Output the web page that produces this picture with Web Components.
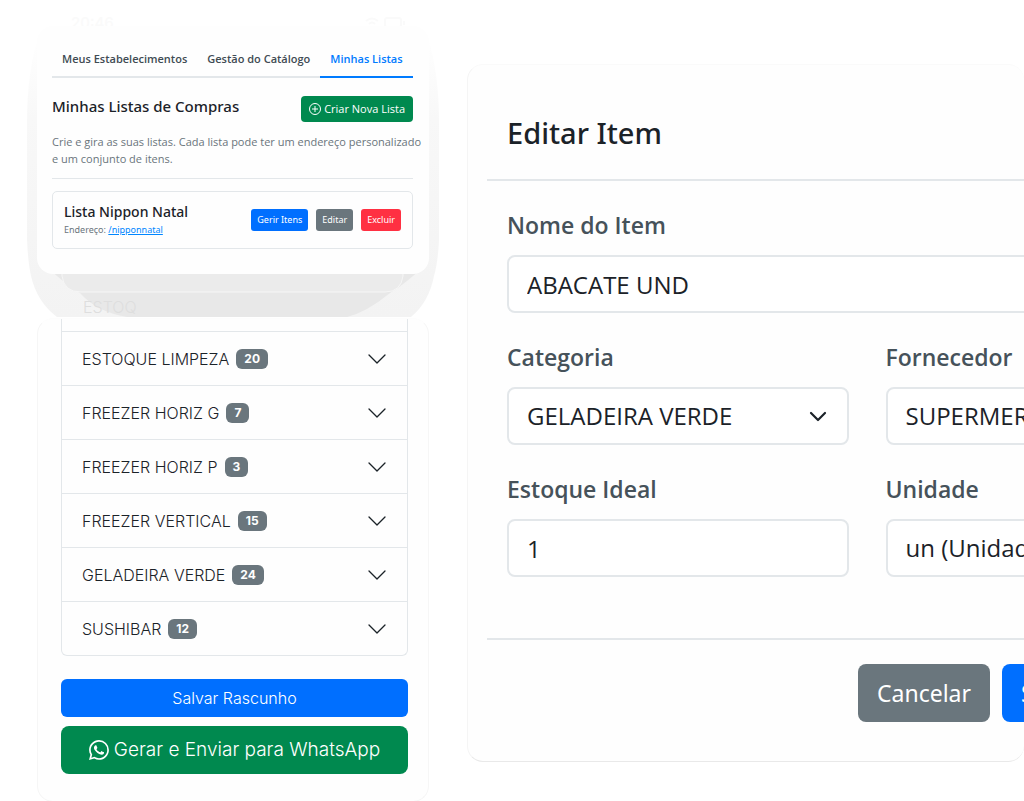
<!DOCTYPE html>
<html lang="pt-BR">
<head>
<meta charset="utf-8">
<meta name="viewport" content="width=device-width, initial-scale=1">
<title>Listas de Compras</title>
<style>
  body { margin: 0; background: #fff; overflow-x: hidden; }
</style>
</head>
<body>
<app-showcase>
  <lists-panel slot="lists"></lists-panel>
  <stock-panel slot="stock"></stock-panel>
  <item-dialog slot="dialog"></item-dialog>
</app-showcase>

<script>
const define = (name, markup) => {
  const template = document.createElement('template');
  template.innerHTML = '<style>*{box-sizing:border-box}</style>' + markup;
  customElements.define(name, class extends HTMLElement {
    constructor() {
      super();
      this.attachShadow({ mode: 'open' }).append(template.content.cloneNode(true));
    }
  });
};

define('app-showcase', `
  <style>
    :host {
      --blue: #006fff; --green: #00894f; --gray: #6a767d; --red: #ff3042;
      --ink: #1b2228; --line: #e3e7ea;
      --ui: "Open Sans", "Noto Sans", sans-serif;
      --heading: "Noto Sans", "Open Sans", sans-serif;
      --phone: Inter, Roboto, sans-serif;
      display: grid; grid-template-columns: minmax(0, 392fr) minmax(0, 557fr);
      column-gap: 38px; padding: 0 0 0 37px; align-items: start;
      font-family: var(--ui); color: var(--ink);
    }
    .column { display: flex; flex-direction: column; gap: 44px; padding-top: 26px; }
    .detail { padding-top: 64px; }
  </style>
  <div class="column"><slot name="lists"></slot><slot name="stock"></slot></div>
  <div class="detail"><slot name="dialog"></slot></div>`);

define('app-button', `
  <style>
    :host { display: inline-flex; --bg: var(--blue); }
    :host([tone=success]) { --bg: var(--green); }
    :host([tone=neutral]) { --bg: var(--gray); }
    :host([tone=danger]) { --bg: var(--red); }
    button {
      flex: 1; display: flex; align-items: center; justify-content: var(--align, center);
      gap: var(--gap, 4px); padding: 0 var(--pad, 6px); height: var(--h, 22px);
      border: 0; border-radius: var(--r, 3px); background: var(--bg); color: #fff;
      font: inherit; white-space: nowrap; cursor: pointer;
    }
  </style>
  <button type="button"><slot></slot></button>`);

define('lists-panel', `
  <style>
    :host { display: block; position: relative; }
    .shade { position: absolute; left: -10px; top: -14px; width: calc(100% + 20px); height: 305px; }
    .status { position: absolute; left: 34px; top: -12px; font: 500 15px/18px var(--phone); color: #fafafa; }
    .status-icons { position: absolute; right: 22px; top: -10px; }
    .ghost { position: absolute; left: 46px; top: 272px; font: 300 16px/18px var(--phone); color: #dedede; }
    .card {
      position: relative; background: #fefefe; border-radius: 16px; padding: 15px 16px 25px 15px;
    }
    nav { display: flex; border-bottom: 2px solid var(--line); height: 37px; font: 600 11px/36px var(--ui); }
    nav a { padding: 0 10px; color: #3f4b53; text-decoration: none; white-space: nowrap; height: 37px; }
    nav a[aria-current] { color: #007bff; border-bottom: 2px solid #007bff; }
    header { display: flex; justify-content: space-between; align-items: center; margin-top: 18px; }
    h1 { margin: 0 0 6px; font: 500 15px/20px var(--heading); }
    header app-button { --h: 26px; --r: 4px; --pad: 8px; --gap: 3px; font: 11px/16px var(--ui); }
    p { margin: 11px -12px 11px 0; font: 11px/17px var(--ui); color: #6a757c; }
    hr { margin: 0 0 12px; border: 0; border-top: 1px solid var(--line); }
    article {
      display: flex; align-items: center; gap: 8px; padding: 0 11px; height: 58px;
      border: 1px solid var(--line); border-radius: 5px; font: 9px/14px var(--heading);
    }
    .name { flex: 1; color: #6a757c; font: 9px/16px var(--heading); }
    h2 { margin: 0; font: 500 14px/20px var(--heading); color: var(--ink); }
    .name a { color: #0086ff; }
  </style>
  <svg class="shade" viewBox="0 0 412 305" preserveAspectRatio="none" aria-hidden="true">
    <defs>
      <linearGradient id="side" x1="0" y1="0" x2="0" y2="1">
        <stop offset="0" stop-color="#fff"/><stop offset=".3" stop-color="#f8f8f8"/>
        <stop offset="1" stop-color="#f3f3f3"/>
      </linearGradient>
    </defs>
    <path d="M12 22Q0 60 0 110V228Q1 250 4 264Q10 290 30 305H384Q402 290 407 264Q411 250 412 228V110Q412 60 400 22Z" fill="url(#side)"/>
    <path d="M20 255Q38 272 53 281Q70 300 100 305H320Q340 300 363 281Q378 272 396 255Z" fill="#e8e8e8"/>
    <path d="M35 261V264Q37 280 54 280H358Q374 280 376 264V261Z" fill="#ebebeb" stroke="#f6f6f6"/>
  </svg>
  <span class="status" aria-hidden="true">20:46</span>
  <svg class="status-icons" width="42" height="14" viewBox="0 0 42 14" fill="none" stroke="#fafafa" stroke-width="2" aria-hidden="true">
    <path d="M1 5Q7 0 13 5M4 8Q7 5 10 8M7 11h1"/><rect x="20" y="2" width="16" height="9" rx="2"/><path d="M39 5v4"/>
  </svg>
  <span class="ghost" aria-hidden="true">ESTOQ</span>
  <section class="card">
    <nav>
      <a href="#estabelecimentos">Meus Estabelecimentos</a>
      <a href="#catalogo">Gestão do Catálogo</a>
      <a href="#listas" aria-current="page">Minhas Listas</a>
    </nav>
    <header>
      <h1>Minhas Listas de Compras</h1>
      <app-button tone="success">
        <svg width="12" height="12" viewBox="0 0 12 12" fill="none" stroke="#fff" aria-hidden="true"><circle cx="6" cy="6" r="5.5"/><path d="M6 3v6M3 6h6"/></svg>
        Criar Nova Lista</app-button>
    </header>
    <p>Crie e gira as suas listas. Cada lista pode ter um endereço personalizado e um conjunto de itens.</p>
    <hr>
    <article>
      <div class="name">
        <h2>Lista Nippon Natal</h2>
        Endereço: <a href="#nipponnatal">/nipponnatal</a>
      </div>
      <app-button>Gerir Itens</app-button>
      <app-button tone="neutral">Editar</app-button>
      <app-button tone="danger">Excluir</app-button>
    </article>
  </section>`);

define('stock-group', `
  <style>
    :host { display: block; border-top: 1px solid var(--line); }
    button {
      display: flex; align-items: center; gap: 7px; width: 100%; height: 53px; padding: 0 21px 0 20px;
      border: 0; background: none; color: var(--ink); font: 300 16px/24px var(--phone); text-align: left; cursor: pointer;
    }
    .count {
      padding: 0 8px; border-radius: 6px; background: var(--gray); color: #fff; font: 700 12px/20px var(--phone);
    }
    svg { margin-left: auto; }
  </style>
  <button type="button" aria-expanded="false">
    <slot></slot><span class="count"><slot name="count"></slot></span>
    <svg width="18" height="10" viewBox="0 0 18 10" fill="none" stroke="#1b2228" stroke-width="1.3" stroke-linecap="round" stroke-linejoin="round" aria-hidden="true"><path d="M1 1l8 8 8-8"/></svg>
  </button>`);

define('stock-panel', `
  <style>
    :host {
      display: block; padding: 0 20px 27px 23px; border-radius: 16px;
      background: #fefefe; border: 1px solid #f6f6f6; border-top-color: #fdfdfd;
    }
    .groups {
      padding-top: 12px; border: 1px solid var(--line); border-top: 0; border-radius: 0 0 6px 6px;
      margin-bottom: 23px;
    }
    .actions { display: flex; flex-direction: column; gap: 9px; }
    .draft { --h: 38px; --r: 6px; font: 300 16px/24px var(--phone); }
    .send { --h: 48px; --r: 8px; --gap: 5px; font: 300 19px/30px var(--phone); }
  </style>
  <div class="groups">
    <stock-group>ESTOQUE LIMPEZA<span slot="count">20</span></stock-group>
    <stock-group>FREEZER HORIZ G<span slot="count">7</span></stock-group>
    <stock-group>FREEZER HORIZ P<span slot="count">3</span></stock-group>
    <stock-group>FREEZER VERTICAL<span slot="count">15</span></stock-group>
    <stock-group>GELADEIRA VERDE<span slot="count">24</span></stock-group>
    <stock-group>SUSHIBAR<span slot="count">12</span></stock-group>
  </div>
  <div class="actions">
    <app-button class="draft">Salvar Rascunho</app-button>
    <app-button class="send" tone="success">
      <svg width="20" height="20" viewBox="0 0 16 16" fill="#fff" aria-hidden="true"><path d="M13.601 2.326A7.85 7.85 0 0 0 7.994 0C3.627 0 .068 3.558.064 7.926c0 1.399.366 2.76 1.057 3.965L0 16l4.204-1.102a7.9 7.9 0 0 0 3.79.965h.004c4.368 0 7.926-3.558 7.93-7.93A7.9 7.9 0 0 0 13.6 2.326zM7.994 14.521a6.6 6.6 0 0 1-3.356-.92l-.24-.144-2.494.654.666-2.433-.156-.251a6.56 6.56 0 0 1-1.007-3.505c0-3.626 2.957-6.584 6.591-6.584a6.56 6.56 0 0 1 4.66 1.931 6.56 6.56 0 0 1 1.928 4.66c-.004 3.639-2.961 6.592-6.592 6.592m3.615-4.934c-.197-.099-1.17-.578-1.353-.646-.182-.065-.315-.099-.445.099-.133.197-.513.646-.627.775-.114.133-.232.148-.43.05-.197-.1-.836-.308-1.592-.985-.59-.525-.985-1.175-1.103-1.372-.114-.198-.011-.304.088-.403.087-.088.197-.232.296-.346.1-.114.133-.198.198-.33.065-.134.034-.248-.015-.347-.05-.099-.445-1.076-.612-1.47-.16-.389-.323-.335-.445-.34-.114-.007-.247-.007-.38-.007a.73.73 0 0 0-.529.247c-.182.198-.691.677-.691 1.654s.71 1.916.81 2.049c.098.133 1.394 2.132 3.383 2.992.47.205.84.326 1.129.418.475.152.904.129 1.246.08.38-.058 1.171-.48 1.338-.943.164-.464.164-.86.114-.992-.049-.133-.182-.198-.38-.298"/></svg>
      Gerar e Enviar para WhatsApp</app-button>
  </div>`);

define('item-dialog', `
  <style>
    :host {
      display: block; overflow: hidden; padding: 19px; border: 1px solid #f5f5f5;
      border-bottom-color: #e9e9e9; border-top-color: #fafafa; border-right: 0; border-radius: 16px; background: #fefefe;
    }
    form { min-width: 760px; }
    header { height: 97px; padding: 0 20px; border-bottom: 2px solid var(--line); }
    h2 { margin: 0; font: 500 29px/97px var(--heading); }
    .fields {
      display: grid; grid-template-columns: 1fr 1fr; gap: 26px 37px; padding: 26px 20px 61px;
    }
    .field { display: grid; gap: 12px; }
    .wide { grid-column: 1 / -1; }
    label { font: 600 23px/36px var(--ui); color: #46525a; }
    .control { display: grid; align-items: center; position: relative; }
    input, select {
      width: 100%; height: 58px; padding: 0 18px; border: 2px solid var(--line); border-radius: 8px;
      background: #fff; color: var(--ink); font: 24px/36px var(--ui); appearance: none; margin: 0;
    }
    svg { position: absolute; right: 22px; pointer-events: none; }
    footer {
      display: flex; gap: 12px; justify-content: flex-end; padding: 24px 20px 20px; border-top: 2px solid var(--line);
    }
    footer app-button { --h: 58px; --r: 8px; --pad: 19px; font: 23px/36px var(--heading); }
    footer app-button:last-child { --align: flex-start; flex-basis: 225px; }
  </style>
  <form>
    <header><h2>Editar Item</h2></header>
    <div class="fields">
      <div class="field wide"><label for="name">Nome do Item</label>
        <div class="control"><input id="name" type="text" value="ABACATE UND"></div></div>
      <div class="field"><label for="category">Categoria</label>
        <div class="control"><select id="category"><option>GELADEIRA VERDE</option></select>
          <svg width="18" height="11" viewBox="0 0 18 11" fill="none" stroke="#1b2228" stroke-width="2.2" stroke-linecap="round" stroke-linejoin="round" aria-hidden="true"><path d="M2 2l7 7 7-7"/></svg></div></div>
      <div class="field"><label for="supplier">Fornecedor</label>
        <div class="control"><select id="supplier"><option>SUPERMERCADO</option></select></div></div>
      <div class="field"><label for="ideal">Estoque Ideal</label>
        <div class="control"><input id="ideal" type="text" inputmode="numeric" value="1"></div></div>
      <div class="field"><label for="unit">Unidade</label>
        <div class="control"><select id="unit"><option>un (Unidade)</option></select></div></div>
    </div>
    <footer>
      <app-button tone="neutral">Cancelar</app-button>
      <app-button>Salvar Alterações</app-button>
    </footer>
  </form>`);
</script>
</body>
</html>
